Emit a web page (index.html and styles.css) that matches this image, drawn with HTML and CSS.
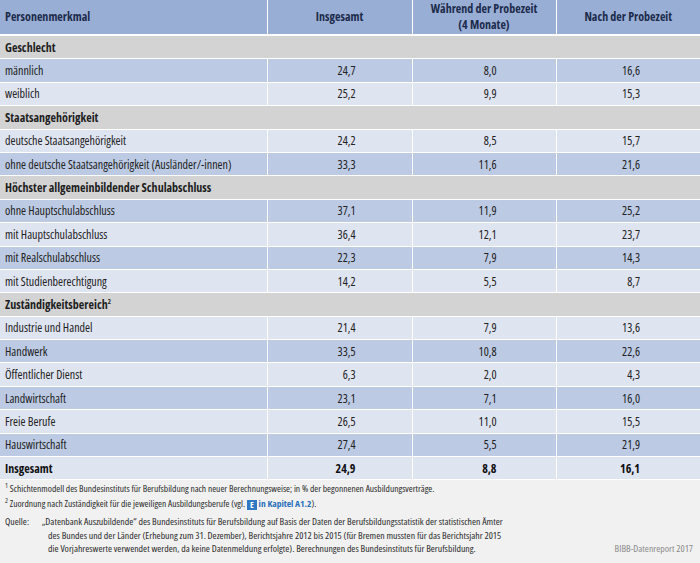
FILE: index.html
```html
<!DOCTYPE html>
<html lang="de">
<head>
<meta charset="utf-8">
<title>Vertragslösungsquoten</title>
<link rel="stylesheet" href="styles.css">
</head>
<body>
<div class="page">
<table class="data">
  <colgroup>
    <col class="c1"><col class="c2"><col class="c3"><col class="c4">
  </colgroup>
  <thead>
    <tr class="head">
      <th class="lab">Personenmerkmal</th>
      <th>Insgesamt</th>
      <th>Während der Probezeit<br>(4 Monate)</th>
      <th>Nach der Probezeit</th>
    </tr>
  </thead>
  <tbody>
    <tr class="sec"><td colspan="4">Geschlecht</td></tr>
    <tr class="dk"><td>männlich</td><td>24,7</td><td>8,0</td><td>16,6</td></tr>
    <tr class="lt"><td>weiblich</td><td>25,2</td><td>9,9</td><td>15,3</td></tr>
    <tr class="sec"><td colspan="4">Staatsangehörigkeit</td></tr>
    <tr class="lt"><td>deutsche Staatsangehörigkeit</td><td>24,2</td><td>8,5</td><td>15,7</td></tr>
    <tr class="dk"><td>ohne deutsche Staatsangehörigkeit (Ausländer/-innen)</td><td>33,3</td><td>11,6</td><td>21,6</td></tr>
    <tr class="sec"><td colspan="4">Höchster allgemeinbildender Schulabschluss</td></tr>
    <tr class="dk"><td>ohne Hauptschulabschluss</td><td>37,1</td><td>11,9</td><td>25,2</td></tr>
    <tr class="lt"><td>mit Hauptschulabschluss</td><td>36,4</td><td>12,1</td><td>23,7</td></tr>
    <tr class="dk"><td>mit Realschulabschluss</td><td>22,3</td><td>7,9</td><td>14,3</td></tr>
    <tr class="lt"><td>mit Studienberechtigung</td><td>14,2</td><td>5,5</td><td>8,7</td></tr>
    <tr class="sec"><td colspan="4">Zuständigkeitsbereich<sup>2</sup></td></tr>
    <tr class="lt"><td>Industrie und Handel</td><td>21,4</td><td>7,9</td><td>13,6</td></tr>
    <tr class="dk"><td>Handwerk</td><td>33,5</td><td>10,8</td><td>22,6</td></tr>
    <tr class="lt"><td>Öffentlicher Dienst</td><td>6,3</td><td>2,0</td><td>4,3</td></tr>
    <tr class="dk"><td>Landwirtschaft</td><td>23,1</td><td>7,1</td><td>16,0</td></tr>
    <tr class="lt"><td>Freie Berufe</td><td>26,5</td><td>11,0</td><td>15,5</td></tr>
    <tr class="dk"><td>Hauswirtschaft</td><td>27,4</td><td>5,5</td><td>21,9</td></tr>
    <tr class="lt total"><td>Insgesamt</td><td>24,9</td><td>8,8</td><td>16,1</td></tr>
  </tbody>
</table>
<div class="notes">
  <p class="fn"><sup>1</sup> Schichtenmodell des Bundesinstituts für Berufsbildung nach neuer Berechnungsweise; in % der begonnenen Ausbildungsverträge.</p>
  <p class="fn"><sup>2</sup> Zuordnung nach Zuständigkeit für die jeweiligen Ausbildungsberufe (vgl. <span class="eicon">E</span> <span class="link">in Kapitel A1.2</span>).</p>
  <div class="source">
    <span class="slabel">Quelle:</span>
    <p class="stext">„Datenbank Auszubildende“ des Bundesinstituts für Berufsbildung auf Basis der Daten der Berufsbildungsstatistik der statistischen Ämter<br>des Bundes und der Länder (Erhebung zum 31. Dezember), Berichtsjahre 2012 bis 2015 (für Bremen mussten für das Berichtsjahr 2015<br>die Vorjahreswerte verwendet werden, da keine Datenmeldung erfolgte). Berechnungen des Bundesinstituts für Berufsbildung.</p>
    <span class="credit">BIBB-Datenreport 2017</span>
  </div>
</div>
</div>
</body>
</html>
```

FILE: styles.css
```css
html, body {
  margin: 0;
  padding: 0;
  background: #ffffff;
}
body {
  font-family: "Open Sans", "DejaVu Sans Condensed", sans-serif;
  font-stretch: 75%;
  color: #222222;
}
.page {
  width: 700px;
}
.data {
  width: 700px;
  border-collapse: collapse;
  table-layout: fixed;
  font-size: 12px;
}
.c1 { width: 267px; }
.c2 { width: 145px; }
.c3 { width: 144px; }
.c4 { width: 144px; }

.data th, .data td {
  border: 1px solid #ffffff;
  padding: 0;
  white-space: nowrap;
}
.head th {
  height: 34px;
  background: #98aed5;
  color: #1c2b4b;
  font-weight: bold;
  text-align: center;
  line-height: 16px;
  border-top: 0;
  border-bottom-width: 2px;
}
.head th.lab {
  text-align: left;
  padding-left: 5px;
  border-left: 0;
}
.data tbody td {
  height: 22.4px;
  text-align: right;
}
.data tbody td:first-child {
  text-align: left;
  padding-left: 5px;
  border-left: 0;
}
.data tbody td:nth-child(2) { padding-right: 56px; }
.data tbody td:nth-child(3) { padding-right: 59px; }
.data tbody td:nth-child(4) { padding-right: 60px; border-right: 0; }
.data th:last-child { border-right: 0; }

.sec td {
  background: #d3d3d3;
  font-weight: bold;
  color: #1e1e1e;
}
.sec sup {
  font-size: 7px;
  vertical-align: 5px;
  line-height: 0;
}
.dk td { background: #bccae4; }
.lt td { background: #dfe4f1; }
.total td {
  font-weight: bold;
  color: #111111;
}

.notes {
  background: #f1f1f1;
  color: #2a2a2a;
  padding: 2px 7px 7px 5px;
  line-height: 13.5px;
}
.fn {
  margin: 0;
  font-size: 9.5px;
}
.fn + .fn {
  margin-top: 1px;
}
.fn sup {
  font-size: 7px;
  vertical-align: 4px;
  line-height: 0;
}
.eicon {
  display: inline-block;
  width: 10px;
  height: 10px;
  line-height: 10px;
  background: #2f79c4;
  color: #ffffff;
  font-weight: bold;
  font-size: 9px;
  text-align: center;
  vertical-align: -1px;
}
.link {
  color: #2a6fba;
  font-weight: bold;
}
.source {
  display: grid;
  grid-template-columns: 37px 1fr auto;
  margin-top: 5px;
  align-items: end;
  font-size: 9.8px;
}
.slabel {
  align-self: start;
}
.stext {
  margin: 0;
  padding-left: 6px;
  text-indent: -6px;
  white-space: nowrap;
}
.credit {
  color: #8a8a8a;
  white-space: nowrap;
}
```
